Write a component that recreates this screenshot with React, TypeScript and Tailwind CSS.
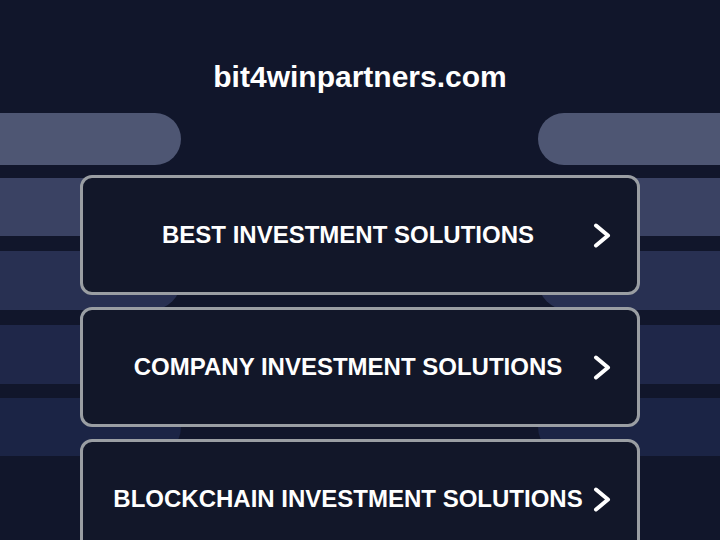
const stripes = [
  { h: "h-[52px]", bg: "bg-[#4e5673]", mt: "" },
  { h: "h-[58px]", bg: "bg-[#3a4263]", mt: "mt-[13px]" },
  { h: "h-[59px]", bg: "bg-[#283052]", mt: "mt-[15px]" },
  { h: "h-[59px]", bg: "bg-[#1f2749]", mt: "mt-[15px]" },
  { h: "h-[58px]", bg: "bg-[#1b2445]", mt: "mt-[14px]" },
];

const links = [
  "BEST INVESTMENT SOLUTIONS",
  "COMPANY INVESTMENT SOLUTIONS",
  "BLOCKCHAIN INVESTMENT SOLUTIONS",
];

function Chevron() {
  return (
    <svg width="18" height="25" viewBox="0 0 18 25" fill="none" aria-hidden>
      <polyline
        points="3,2.5 15,12.5 3,22.5"
        stroke="white"
        strokeWidth="4"
        strokeLinecap="round"
        strokeLinejoin="round"
      />
    </svg>
  );
}

export default function App() {
  return (
    <div
      className="relative min-h-screen w-full overflow-hidden bg-[#11162b]"
      style={{ fontFamily: '"Liberation Sans", Arial, sans-serif' }}
    >
      {/* decorative pills behind the link list */}
      <div className="absolute inset-x-0 top-[113px] flex flex-col" aria-hidden>
        {stripes.map((s, i) => (
          <div key={i} className={`flex justify-between ${s.h} ${s.mt}`}>
            <div className={`w-[181px] rounded-r-full ${s.bg}`} />
            <div className={`w-[182px] rounded-l-full ${s.bg}`} />
          </div>
        ))}
      </div>

      <div className="relative flex flex-col items-center">
        <h1 className="pt-[59px] text-[30px] leading-[36px] font-bold text-white">
          bit4winpartners.com
        </h1>

        <ul className="mt-[80px] flex w-[560px] flex-col gap-[12px]">
          {links.map((label) => (
            <li key={label}>
              <a
                href="#"
                className="flex h-[120px] items-center rounded-[12px] border-[3px] border-[#9a9ea3] bg-[#121729] pr-[26px] pl-[20px]"
              >
                <span className="flex-1 text-center text-2xl font-bold text-white">
                  {label}
                </span>
                <Chevron />
              </a>
            </li>
          ))}
        </ul>
      </div>
    </div>
  );
}
